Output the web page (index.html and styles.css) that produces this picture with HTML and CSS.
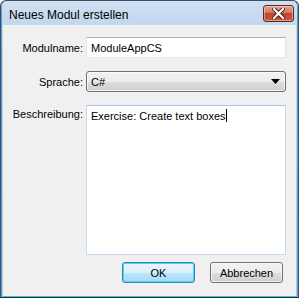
FILE: index.html
```html
<!DOCTYPE html>
<html lang="de">
<head>
  <meta charset="UTF-8" />
  <title>Neues Modul erstellen</title>
  <link rel="stylesheet" href="styles.css">
</head>
<body>
  <div class="window">
    <div class="titlebar">
      <span class="title">Neues Modul erstellen</span>
      <button class="close" type="button" aria-label="Schließen">
        <svg width="13" height="11" viewBox="0 0 13 11">
          <path d="M2 1 L11 10 M11 1 L2 10" stroke="#3a1a14" stroke-width="4" stroke-linecap="square" />
          <path d="M2 1 L11 10 M11 1 L2 10" stroke="#ffffff" stroke-width="2.2" stroke-linecap="square" />
        </svg>
      </button>
    </div>
    <form class="client">
      <label class="lbl" for="name">Modulname:</label>
      <input class="textbox" id="name" type="text" value="ModuleAppCS" />

      <label class="lbl" for="lang">Sprache:</label>
      <div class="combo" id="lang">
        <span>C#</span>
        <svg width="9" height="5" viewBox="0 0 9 5"><path d="M0 0 H9 L4.5 5 Z" fill="#000" /></svg>
      </div>

      <label class="lbl lbl-top" for="desc">Beschreibung:</label>
      <div class="textarea" id="desc">Exercise: Create text boxes<span class="caret"></span></div>

      <div class="buttons">
        <button class="btn btn-default" type="submit">OK</button>
        <button class="btn" type="button">Abbrechen</button>
      </div>
    </form>
  </div>
</body>
</html>
```

FILE: styles.css
```css
body {
  margin: 0;
  background: #ffffff;
  font-family: "Liberation Sans", Arial, sans-serif;
  font-size: 11px;
  color: #000;
}
.window {
  width: 299px;
  height: 298px;
  box-sizing: border-box;
  border: 1px solid #3f4d5e;
  border-bottom-color: #1f2b38;
  border-radius: 6px 6px 0 0;
  background: linear-gradient(#d0e0f2, #bfd4ed 30px, #a9c6e6);
  padding: 0 2px 1px 2px;
  display: flex;
  flex-direction: column;
  box-shadow: inset 0 -1px 0 #3cc3e9, inset 1px 0 0 #5aa0d6, inset -1px 0 0 #5aa0d6;
}
.titlebar {
  height: 24px;
  display: flex;
  align-items: center;
  justify-content: space-between;
  padding-left: 6px;
}
.title {
  font-size: 12px;
  color: #000;
  margin-top: 3px;
}
.close {
  width: 31px;
  height: 17px;
  margin-top: 1px;
  margin-right: 2px;
  padding: 0;
  border: 1px solid #5b2a22;
  border-radius: 3px;
  background: linear-gradient(#e6a594, #d3765f 45%, #c1432c 50%, #c95a3d);
  box-shadow: inset 0 0 0 1px rgba(255, 220, 210, 0.5);
  display: flex;
  align-items: center;
  justify-content: center;
}
.client {
  flex: 1;
  margin: 0;
  background: #f0f0f0;
  display: grid;
  grid-template-columns: 80px 200px;
  grid-template-rows: 21px 21px 150px 21px;
  column-gap: 3px;
  row-gap: 13px;
  padding: 12px 0 0 0;
  align-content: start;
}
.lbl {
  justify-self: end;
  align-self: center;
  margin-right: 0;
}
.lbl-top {
  align-self: start;
  margin-top: 3px;
}
.textbox {
  box-sizing: border-box;
  height: 21px;
  width: 200px;
  margin: 0;
  padding: 0 4px;
  border: 1px solid #e2e3ea;
  border-top-color: #abadb3;
  border-bottom-color: #e3e9ef;
  background: #fff;
  font: inherit;
  color: #000;
}
.combo {
  box-sizing: border-box;
  height: 21px;
  border: 1px solid #707070;
  border-radius: 3px;
  background: linear-gradient(#f2f2f2, #ebebeb 50%, #dddddd 51%, #cfcfcf);
  box-shadow: inset 0 0 0 1px rgba(255, 255, 255, 0.7);
  display: flex;
  align-items: center;
  justify-content: space-between;
  padding: 0 5px 0 4px;
}
.textarea {
  box-sizing: border-box;
  height: 150px;
  border: 1px solid #c5daef;
  border-top-color: #a9c8e8;
  background: #fff;
  padding: 3px 4px;
  line-height: 14px;
}
.caret {
  display: inline-block;
  width: 1px;
  height: 13px;
  background: #000;
  vertical-align: -2px;
}
.buttons {
  grid-column: 1 / 3;
  display: flex;
  justify-content: flex-end;
  gap: 15px;
  margin-top: -6px;
  padding-right: 3px;
}
.btn {
  box-sizing: border-box;
  width: 73px;
  height: 21px;
  margin: 0;
  padding: 0;
  border: 1px solid #707070;
  border-radius: 3px;
  background: linear-gradient(#f2f2f2, #ebebeb 50%, #dddddd 51%, #cfcfcf);
  box-shadow: inset 0 0 0 1px rgba(255, 255, 255, 0.7);
  font: inherit;
  color: #000;
}
.btn-default {
  border-color: #3c7fb1;
  background: linear-gradient(#eaf6fd, #d9f0fc 50%, #bee6fd 51%, #a7d9f5);
  box-shadow: inset 0 0 0 1px #48d6fb;
}
```
